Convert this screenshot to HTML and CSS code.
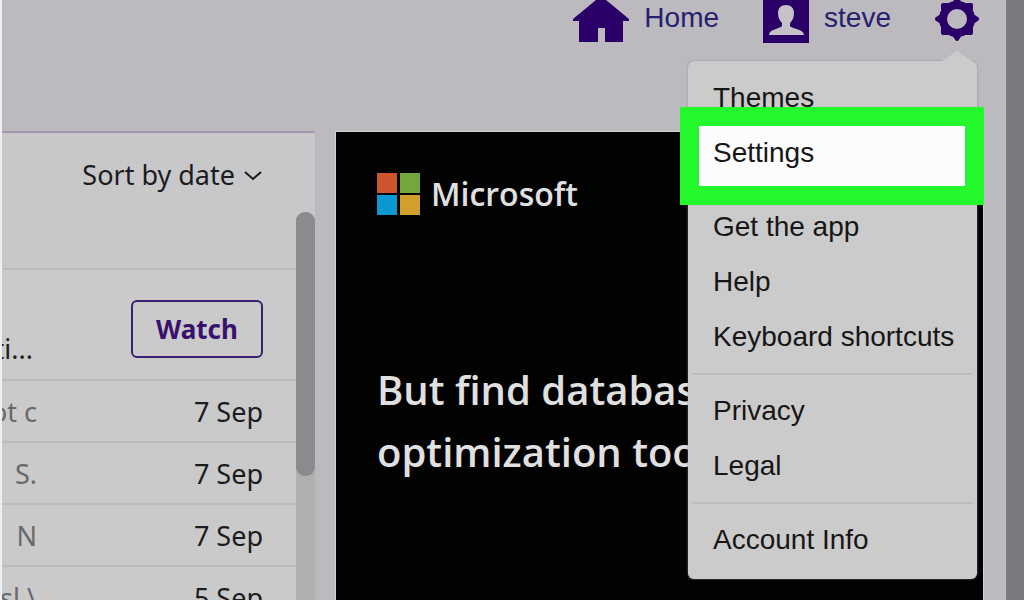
FILE: index.html
```html
<!DOCTYPE html>
<html lang="en">
<head>
    <meta charset="UTF-8">
    <meta name="viewport" content="width=device-width, initial-scale=1.0">
    <title>Mail</title>
    <link rel="stylesheet" href="styles.css">
</head>
<body>
    <div class="app">
        <header class="main-header">
            <a href="#" class="nav-link">
                <svg class="icon" width="56" height="42" viewBox="0 0 56 42" aria-hidden="true">
                    <path d="M23 0h10l23 19v2h-6v21H32V28h-7v14H6V21H0v-2z"/>
                </svg>
                Home
            </a>
            <a href="#" class="nav-link">
                <svg class="icon" width="46" height="43" viewBox="0 0 46 43" aria-hidden="true">
                    <path d="M0 0h46v43H0z"/>
                    <path class="cutout" d="M23 5c-5 0-8 3-8 8 0 5 2 8 4 10v3c-2 3-13 3-13 9h35c0-6-12-6-14-9v-3c2-2 4-5 4-10 0-5-3-8-8-8z"/>
                </svg>
                steve
            </a>
            <div class="settings">
                <button class="gear" aria-label="Settings menu" aria-expanded="true">
                    <svg class="icon" width="44" height="42" viewBox="-22 -19 44 42" aria-hidden="true">
                        <circle class="ring" r="14"/>
                        <g class="teeth">
                            <path d="M-2-17L0-20 2-17M-2 17L0 20 2 17M-17-2L-20 0-17 2M17-2L20 0 17 2"/>
                            <path d="M10-14l4 0 0 4M10 14l4 0 0-4M-10 14l-4 0 0-4M-10-14l-4 0 0 4"/>
                        </g>
                    </svg>
                </button>
                <nav class="menu">
                    <ul>
                        <li><a href="#">Themes</a></li>
                        <li class="highlight"><a href="#">Settings</a></li>
                    </ul>
                    <ul>
                        <li><a href="#">Get the app</a></li>
                        <li><a href="#">Help</a></li>
                        <li><a href="#">Keyboard shortcuts</a></li>
                    </ul>
                    <ul>
                        <li><a href="#">Privacy</a></li>
                        <li><a href="#">Legal</a></li>
                    </ul>
                    <ul>
                        <li><a href="#">Account Info</a></li>
                    </ul>
                </nav>
            </div>
        </header>

        <main class="main-body">
            <section class="mail">
                <div class="toolbar">
                    <button class="sort">
                        Sort by date
                        <svg width="18" height="12" viewBox="0 0 18 12" aria-hidden="true">
                            <path d="M1 3l8 7 8-7"/>
                        </svg>
                    </button>
                </div>
                <div class="mail-body">
                    <div class="rows">
                        <div class="row blank"></div>
                        <div class="row promo">
                            <span class="promo-text">ti...</span>
                            <button class="watch">Watch</button>
                        </div>
                        <div class="row"><span class="snippet">ot c</span><span>7 Sep</span></div>
                        <div class="row"><span class="snippet">S.</span><span>7 Sep</span></div>
                        <div class="row"><span class="snippet">N</span><span>7 Sep</span></div>
                        <div class="row"><span class="snippet">sl \</span><span>5 Sep</span></div>
                    </div>
                    <div class="scrollbar"><div class="thumb"></div></div>
                </div>
            </section>

            <section class="ad">
                <div class="brand">
                    <svg width="43" height="42" viewBox="0 0 43 42" aria-hidden="true">
                        <path fill="#cf5530" d="M0 0h20v20H0z"/>
                        <path fill="#73a83c" d="M23 0h20v20H23z"/>
                        <path fill="#0c98d0" d="M0 22h20v20H0z"/>
                        <path fill="#d0a02c" d="M23 22h20v20H23z"/>
                    </svg>
                    Microsoft
                </div>
                <p class="slogan">But find database<br>optimization tools</p>
            </section>
        </main>
    </div>
</body>
</html>
```
FILE: styles.css
```css
* {
    box-sizing: border-box;
}

body {
    height: 100vh;
    margin: 0;
    overflow: hidden;
    background-color: #7c7980;
    font-family: "Noto Sans", "Open Sans", sans-serif;
    font-size: 27px;
    color: #1c1c1e;
}

button {
    font: inherit;
    color: inherit;
    background: none;
    border: none;
    padding: 0;
    cursor: pointer;
}

a {
    color: inherit;
    text-decoration: none;
}

svg {
    display: block;
    flex-shrink: 0;
}

.app {
    display: flex;
    flex-direction: column;
    height: 100%;
    margin-right: 18px;
    border-left: 2px solid #f0f0f2;
    background-color: #bcb9bf;
}

/* top bar */
.main-header {
    display: flex;
    justify-content: flex-end;
    align-items: flex-start;
    gap: 44px;
    height: 131px;
    flex-shrink: 0;
    padding-right: 27px;
    font-family: "Liberation Sans", Arial, sans-serif;
    font-size: 28px;
    line-height: 36px;
}

.nav-link {
    display: flex;
    gap: 15px;
    color: #26206e;
}

.icon {
    fill: #2a0068;
}

.icon .cutout {
    fill: #c4c1c8;
}

.icon .ring {
    fill: none;
    stroke: #2a0068;
    stroke-width: 8;
}

.icon .teeth {
    fill: none;
    stroke: #2a0068;
    stroke-width: 4;
    stroke-linecap: round;
    stroke-linejoin: round;
}

.settings {
    position: relative;
}

.gear {
    display: block;
}

/* drop-down menu */
.menu {
    position: absolute;
    z-index: 1;
    top: 61px;
    right: 2px;
    width: 289px;
    padding-bottom: 3px;
    border-radius: 6px;
    background-color: #cbcbcb;
    box-shadow: 0 0 2px #8a8a8a;
    color: #161616;
}

.menu::before {
    content: "";
    position: absolute;
    top: -10px;
    right: 5px;
    border: 15px solid transparent;
    border-top: none;
    border-bottom: 10px solid #cbcbcb;
}

.menu ul {
    margin: 0 4px;
    padding: 9px 0;
    list-style: none;
}

.menu ul + ul {
    border-top: 2px solid #bdbdbd;
    padding-top: 8px;
}

.menu a {
    display: block;
    padding: 0 21px;
    line-height: 55px;
    white-space: nowrap;
}

.highlight {
    position: relative;
}

.highlight::before {
    content: "";
    position: absolute;
    top: -18px;
    right: -11px;
    bottom: -25px;
    left: -12px;
    border: 19px solid #22f82c;
    background-color: #fcfcfc;
}

.highlight a {
    position: relative;
}

.main-body {
    display: flex;
    flex: 1;
    gap: 20px;
    min-height: 0;
    padding-right: 22px;
}

/* message list */
.mail {
    display: flex;
    flex-direction: column;
    width: 313px;
    flex-shrink: 0;
    border-top: 2px solid #a398ae;
    background-color: #c8c8ca;
}

.toolbar {
    height: 79px;
    flex-shrink: 0;
    padding: 24px 53px 0 0;
}

.sort {
    display: flex;
    align-items: center;
    gap: 9px;
    margin-left: auto;
    line-height: 36px;
}

.sort svg {
    fill: none;
    stroke: #1c1c1e;
    stroke-width: 2;
}

.mail-body {
    display: flex;
    flex: 1;
    min-height: 0;
}

.rows {
    flex: 1;
}

.row {
    display: flex;
    justify-content: space-between;
    align-items: center;
    height: 62px;
    padding-right: 33px;
    border-bottom: 2px solid #bcbcbe;
    background-color: #cacacb;
}

.row.blank {
    height: 58px;
    background: none;
}

.row.promo {
    height: 111px;
    padding-top: 8px;
}

.promo-text,
.snippet {
    display: flex;
    justify-content: flex-end;
    width: 35px;
    overflow: hidden;
    white-space: pre;
}

.promo-text {
    align-self: flex-end;
    width: 31px;
    padding-bottom: 12px;
}

.snippet {
    color: #69696b;
}

.watch {
    width: 132px;
    height: 58px;
    border: 2px solid #3c2070;
    border-radius: 6px;
    font-size: 26px;
    font-weight: bold;
    color: #38106e;
}

.scrollbar {
    width: 19px;
    background-color: #b0b0b1;
    border-radius: 9px 9px 0 0;
}

.thumb {
    height: 264px;
    border-radius: 9px;
    background-color: #8b8b8d;
}

/* advert */
.ad {
    flex: 1;
    min-width: 0;
    padding: 41px 41px 0;
    border: 1px solid #d0d0d2;
    border-bottom: none;
    background-color: #020202;
    color: #e0e0e0;
    overflow: hidden;
    white-space: nowrap;
}

.brand {
    display: flex;
    align-items: center;
    gap: 11px;
    font-family: "Open Sans", sans-serif;
    font-size: 32px;
    font-weight: 600;
    line-height: 42px;
}

.slogan {
    margin: 144px 0 0;
    font-family: "Open Sans", sans-serif;
    font-size: 40px;
    font-weight: 600;
    line-height: 62px;
}
```
